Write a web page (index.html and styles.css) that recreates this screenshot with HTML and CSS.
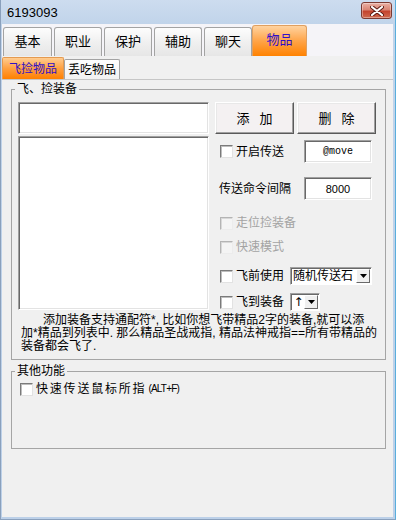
FILE: index.html
```html
<!DOCTYPE html>
<html lang="zh-CN">
  <head>
    <meta charset="UTF-8" />
    <meta name="viewport" content="width=device-width, initial-scale=1.0" />
    <title>6193093</title>
    <link rel="stylesheet" href="styles.css">
  </head>
  <body>
    <div class="window">
      <div class="titlebar">
        <span class="title">6193093</span>
        <button class="close" title="关闭">
          <svg width="14" height="10" viewBox="0 0 14 10">
            <path d="M2 1 L12 9 M12 1 L2 9" stroke="#5a1a12" stroke-width="4" stroke-linecap="round" />
            <path d="M2 1 L12 9 M12 1 L2 9" stroke="#fff" stroke-width="2.2" stroke-linecap="round" />
          </svg>
        </button>
      </div>

      <div class="client">
        <div class="tabs">
          <div class="tab first">基本</div>
          <div class="tab">职业</div>
          <div class="tab">保护</div>
          <div class="tab">辅助</div>
          <div class="tab">聊天</div>
          <div class="tab active">物品</div>
        </div>

        <div class="subtabs">
          <div class="subtab active">飞捡物品</div>
          <div class="subtab">丢吃物品</div>
        </div>

        <div class="panel">
          <fieldset class="group pick">
            <legend>飞、捡装备</legend>
            <div class="pick-body">
              <div class="pick-left">
                <input class="edit item-name" type="text" />
                <div class="edit listbox"></div>
              </div>
              <div class="pick-right">
                <div class="buttons">
                  <button class="btn">添加</button>
                  <button class="btn">删除</button>
                </div>
                <div class="row row-send">
                  <label class="check"><input type="checkbox" />开启传送</label>
                  <input class="edit small mono" type="text" value="@move" />
                </div>
                <div class="row row-interval">
                  <span class="caption">传送命令间隔</span>
                  <input class="edit small" type="text" value="8000" />
                </div>
                <div class="row row-walk">
                  <label class="check disabled"><input type="checkbox" disabled />走位捡装备</label>
                </div>
                <div class="row row-fast">
                  <label class="check disabled"><input type="checkbox" disabled />快速模式</label>
                </div>
                <div class="row row-before">
                  <label class="check"><input type="checkbox" />飞前使用</label>
                  <div class="combo wide">
                    <span class="combo-text">随机传送石</span>
                    <span class="combo-btn">
                      <svg width="7" height="4" viewBox="0 0 7 4"><path d="M0 0 H7 L3.5 4 Z" fill="#000" /></svg>
                    </span>
                  </div>
                </div>
                <div class="row row-fly">
                  <label class="check"><input type="checkbox" />飞到装备</label>
                  <div class="combo narrow">
                    <span class="combo-text">↑</span>
                    <span class="combo-btn">
                      <svg width="7" height="4" viewBox="0 0 7 4"><path d="M0 0 H7 L3.5 4 Z" fill="#000" /></svg>
                    </span>
                  </div>
                </div>
              </div>
            </div>
            <p class="note">
              <span class="first-line">添加装备支持通配符*, 比如你想飞带精品2字的装备,就可以添</span><br />
              加*精品到列表中. 那么精品圣战戒指, 精品法神戒指==所有带精品的<br />
              装备都会飞了.
            </p>
          </fieldset>

          <fieldset class="group other">
            <legend>其他功能</legend>
            <label class="check wide-text"><input type="checkbox" />快速传送鼠标所指<span class="hotkey">(ALT+F)</span></label>
          </fieldset>
        </div>
      </div>
    </div>
  </body>
</html>
```

FILE: styles.css
```css
body {
  margin: 0;
  padding: 0;
  font-family: "Liberation Sans", "Noto Sans CJK SC", sans-serif;
  font-size: 12px;
  line-height: 14px;
  color: #000;
  background: #fff;
}

.window {
  width: 396px;
  height: 520px;
  box-sizing: border-box;
  display: flex;
  flex-direction: column;
  border: 1px solid #8aa0bc;
  border-right-color: #5aaedc;
  border-top: none;
  padding: 0 2px 2px 1px;
  background: linear-gradient(#cddcef, #c1d4ea 24px, #bcd0e8);
}

/* title bar */
.titlebar {
  height: 24px;
  flex: none;
  display: flex;
  align-items: center;
  justify-content: space-between;
  padding: 0 1px 0 5px;
}
.title {
  font-size: 13px;
  line-height: 16px;
  margin-top: 1px;
}
.close {
  width: 31px;
  height: 17px;
  margin-top: -3px;
  padding: 0;
  display: flex;
  align-items: center;
  justify-content: center;
  border: 1px solid #7b3a32;
  border-radius: 3px;
  background: linear-gradient(#eab0a4, #d98574 45%, #c4432d 55%, #cf6a4f);
  box-shadow: inset 0 0 0 1px rgba(255, 255, 255, 0.35);
}

.client {
  flex: 1;
  display: flex;
  flex-direction: column;
  background: #f0f0f0;
}

/* main tabs */
.tabs {
  height: 32px;
  flex: none;
  display: flex;
  align-items: flex-end;
  gap: 2px;
  padding-left: 1px;
  background: #f5f4f8;
}
.tab {
  width: 48px;
  height: 29px;
  box-sizing: border-box;
  border: 1px solid #a3a3a3;
  border-bottom: none;
  border-radius: 3px 3px 0 0;
  background: linear-gradient(#fdfdfd, #f0f0f0 50%, #e6e6e6);
  display: flex;
  align-items: center;
  justify-content: center;
  font-size: 13px;
  line-height: 16px;
}
.tab.first {
  width: 49px;
}
.tab.active {
  width: 55px;
  height: 31px;
  margin-left: -2px;
  border-color: #e0a060;
  background: linear-gradient(#ffd3a0, #ffa448 50%, #ff8200);
  color: #3010c8;
  padding-bottom: 2px;
}

/* sub tabs */
.subtabs {
  height: 23px;
  flex: none;
  display: flex;
  align-items: flex-end;
  background: #f0f0f0;
}
.subtab {
  width: 56px;
  height: 20px;
  box-sizing: border-box;
  border: 1px solid #a3a3a3;
  border-bottom: none;
  border-radius: 2px 2px 0 0;
  background: linear-gradient(#fefefe, #f2f2f2);
  display: flex;
  align-items: center;
  justify-content: center;
  font-size: 12px;
}
.subtab.active {
  width: 62px;
  height: 22px;
  border-color: #e49a50;
  background: linear-gradient(#ffcc90, #ffa040 50%, #ff8000);
  color: #3010c8;
}

/* tab page */
.panel {
  flex: 1;
  border-top: 1px solid #c6c6c6;
  padding: 2px 7px 0 9px;
}

.group {
  margin: 0;
  padding: 6px 7px 6px 6px;
  border: 1px solid #a5a5a5;
  min-width: 0;
}
.group legend {
  margin-left: -3px;
  padding: 0 2px;
  font-size: 12px;
  line-height: 14px;
}

.pick-body {
  display: flex;
  gap: 6px;
}
.pick-left {
  width: 191px;
  display: flex;
  flex-direction: column;
  gap: 2px;
}
.pick-right {
  flex: 1;
  display: flex;
  flex-direction: column;
}

/* sunken edit controls */
.edit {
  box-sizing: border-box;
  margin: 0;
  padding: 0;
  border: 1px solid;
  border-color: #a0a0a0 #fff #fff #a0a0a0;
  box-shadow: inset 1px 1px 0 #696969, inset -1px -1px 0 #e3e3e3;
  background: #fff;
  font-family: "Liberation Sans", sans-serif;
  font-size: 11px;
  text-align: center;
  outline: none;
}
.item-name {
  height: 32px;
}
.listbox {
  height: 174px;
}
.small {
  width: 68px;
  height: 23px;
  margin-left: auto;
  margin-right: 6px;
}
.mono {
  font-family: "Liberation Mono", monospace;
  font-size: 10px;
}

.buttons {
  display: flex;
  gap: 3px;
}
.btn {
  width: 79px;
  height: 32px;
  padding: 0 0 0 10px;
  border: 1px solid;
  border-color: #fff #5a5a5a #5a5a5a #fff;
  box-shadow: inset -1px -1px 0 #a0a0a0, inset 1px 1px 0 #e8e8e8;
  background: #f4f1f2;
  font-family: "Noto Sans CJK SC", sans-serif;
  font-size: 13px;
  letter-spacing: 10px;
  line-height: 16px;
}

.row {
  display: flex;
  align-items: center;
  height: 18px;
}
.row-send {
  height: 23px;
  margin-top: 6px;
}
.row-interval {
  height: 23px;
  margin-top: 14px;
  padding-left: 4px;
}
.row-walk {
  margin-top: 14px;
}
.row-fast {
  margin-top: 6px;
}
.row-before {
  margin-top: 11px;
}
.row-fly {
  margin-top: 8px;
}

/* checkboxes */
.check {
  display: flex;
  align-items: center;
  gap: 3px;
  padding-left: 5px;
  white-space: nowrap;
}
.check input {
  appearance: none;
  width: 13px;
  height: 13px;
  margin: 0;
  box-sizing: border-box;
  border: 1px solid;
  border-color: #7a7a7a #e2e2e2 #e2e2e2 #7a7a7a;
  box-shadow: inset 1px 1px 0 #bdbdbd;
  background: #fff;
}
.check.disabled {
  color: #a3a3a3;
}
.check.disabled input {
  border-color: #b4b4b4 #ececec #ececec #b4b4b4;
  box-shadow: inset 1px 1px 0 #d8d8d8;
  background: #f4f4f4;
}

/* drop-down lists */
.combo {
  box-sizing: border-box;
  height: 18px;
  margin-left: 6px;
  display: flex;
  align-items: stretch;
  border: 1px solid;
  border-color: #a0a0a0 #fff #fff #a0a0a0;
  box-shadow: inset 1px 1px 0 #696969;
  background: #fff;
  padding: 1px 1px 1px 2px;
}
.combo.wide {
  width: 82px;
}
.combo.narrow {
  width: 30px;
}
.combo-text {
  flex: 1;
  font-size: 12px;
  line-height: 14px;
  white-space: nowrap;
  overflow: hidden;
}
.combo.narrow .combo-text {
  text-align: center;
  font-family: "DejaVu Sans", sans-serif;
}
.combo-btn {
  width: 14px;
  box-sizing: border-box;
  display: flex;
  align-items: center;
  justify-content: center;
  border: 1px solid;
  border-color: #fff #696969 #696969 #fff;
  background: #f0f0f0;
}

.note {
  margin: 3px 0 0 3px;
  font-size: 12px;
  line-height: 13px;
  white-space: nowrap;
}
.note .first-line {
  padding-left: 22px;
}

.other {
  margin-top: 4px;
  height: 85px;
  box-sizing: border-box;
  padding: 4px 7px 0 8px;
}
.other legend {
  margin-left: -5px;
}
.other .check {
  padding-left: 0;
}
.wide-text {
  letter-spacing: 1.8px;
}
.hotkey {
  font-family: "Liberation Sans", sans-serif;
  font-size: 10px;
  letter-spacing: -0.8px;
  margin-left: -1px;
}
```
